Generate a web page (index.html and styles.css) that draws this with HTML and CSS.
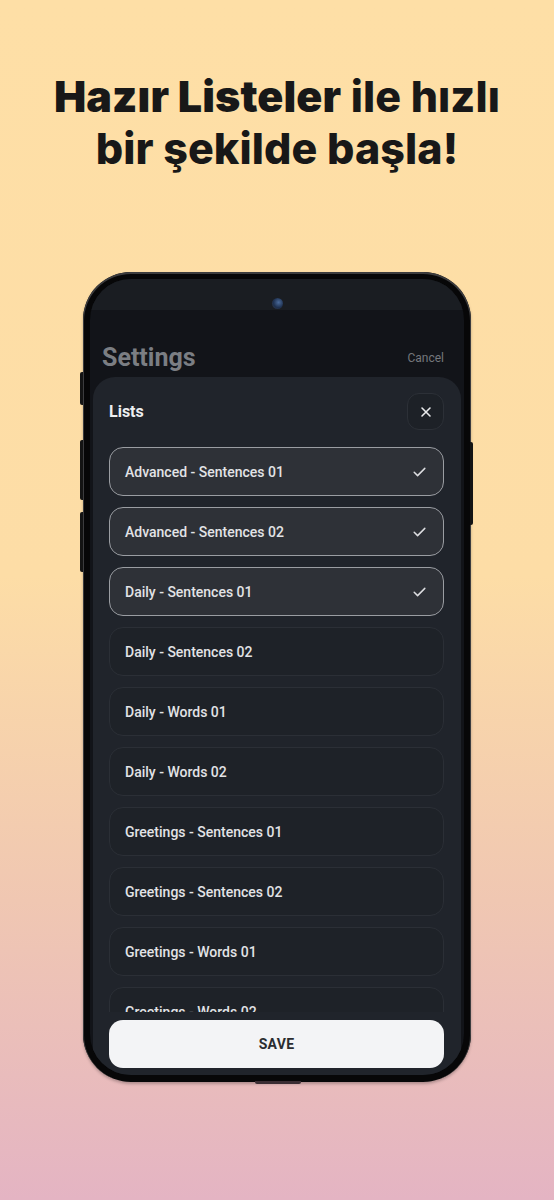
FILE: index.html
```html
<!DOCTYPE html>
<html lang="tr">
<head>
  <meta charset="UTF-8">
  <title>Hazır Listeler</title>
  <link rel="stylesheet" href="styles.css">
</head>
<body>

  <h1 class="headline"><span class="heavy">Hazır Listeler</span> ile hızlı<br>bir şekilde başla!</h1>

  <div class="phone">
    <!-- side buttons -->
    <span class="side-btn left b1"></span>
    <span class="side-btn left b2"></span>
    <span class="side-btn left b3"></span>
    <span class="side-btn right b4"></span>
    <span class="port"></span>

    <div class="screen">
      <div class="status-bar"><span class="camera"></span></div>

      <div class="settings-head">
        <h2>Settings</h2>
        <span class="cancel">Cancel</span>
      </div>

      <div class="sheet">
        <div class="sheet-head">
          <h3>Lists</h3>
          <button class="close" aria-label="close">
            <svg width="12" height="12" viewBox="0 0 12 12"><path d="M2 2L10 10M10 2L2 10" stroke="#e9eaec" stroke-width="1.6" stroke-linecap="round"/></svg>
          </button>
        </div>

        <ul class="lists">
          <li class="item selected">Advanced - Sentences 01<svg class="check" width="13" height="10" viewBox="0 0 13 10"><path d="M1.2 5.2L4.6 8.6L11.8 1.4" fill="none" stroke="#dcdde0" stroke-width="1.5" stroke-linecap="round" stroke-linejoin="round"/></svg></li>
          <li class="item selected">Advanced - Sentences 02<svg class="check" width="13" height="10" viewBox="0 0 13 10"><path d="M1.2 5.2L4.6 8.6L11.8 1.4" fill="none" stroke="#dcdde0" stroke-width="1.5" stroke-linecap="round" stroke-linejoin="round"/></svg></li>
          <li class="item selected">Daily - Sentences 01<svg class="check" width="13" height="10" viewBox="0 0 13 10"><path d="M1.2 5.2L4.6 8.6L11.8 1.4" fill="none" stroke="#dcdde0" stroke-width="1.5" stroke-linecap="round" stroke-linejoin="round"/></svg></li>
          <li class="item">Daily - Sentences 02</li>
          <li class="item">Daily - Words 01</li>
          <li class="item">Daily - Words 02</li>
          <li class="item">Greetings - Sentences 01</li>
          <li class="item">Greetings - Sentences 02</li>
          <li class="item">Greetings - Words 01</li>
          <li class="item">Greetings - Words 02</li>
        </ul>

        <button class="save">SAVE</button>
      </div>
    </div>
  </div>

</body>
</html>
```

FILE: styles.css
```css
html, body {
  margin: 0;
  padding: 0;
}

body {
  min-height: 1200px;
  background: linear-gradient(to bottom, #fedfa6 0%, #fddda6 48%, #f0c7b2 75%, #e4b4c3 100%);
  font-family: Inter, "Noto Sans", sans-serif;
  overflow: hidden;
}

.headline {
  margin: 70px 0 0;
  text-align: center;
  font-size: 43px;
  line-height: 52px;
  font-weight: 800;
  letter-spacing: 0.1px;
  color: #181818;
}

.headline .heavy {
  font-weight: 900;
}

/* phone frame */
.phone {
  position: relative;
  width: 388px;
  height: 810px;
  margin: 98px auto 0;
  padding: 7px;
  box-sizing: border-box;
  background: #070708;
  border-radius: 48px;
  box-shadow: inset 0 1px 0 1px #3c3c3e, 0 2px 3px rgba(0,0,0,0.25);
}

.side-btn {
  position: absolute;
  width: 3px;
  background: #141414;
}

.side-btn.left { left: -3px; border-radius: 2px 0 0 2px; }
.side-btn.right { right: -2px; border-radius: 0 2px 2px 0; }
.b1 { top: 100px; height: 33px; }
.b2 { top: 168px; height: 60px; }
.b3 { top: 240px; height: 60px; }
.b4 { top: 170px; height: 83px; }

.port {
  position: absolute;
  left: 172px;
  bottom: -2px;
  width: 46px;
  height: 3px;
  background: #3a2d33;
  border-radius: 0 0 2px 2px;
}

.screen {
  height: 796px;
  border-radius: 41px;
  overflow: hidden;
  background: #121419;
  display: flex;
  flex-direction: column;
  font-family: Roboto, "Noto Sans", sans-serif;
}

.status-bar {
  height: 31px;
  flex: none;
  background: #1a1d22;
  display: flex;
  justify-content: center;
  align-items: flex-end;
}

.camera {
  width: 11px;
  height: 11px;
  margin-bottom: 1px;
  border-radius: 50%;
  background: radial-gradient(circle at 60% 40%, #4a6a9a 0%, #1f3150 55%, #30343b 100%);
}

.settings-head {
  height: 67px;
  flex: none;
  display: flex;
  justify-content: space-between;
  align-items: center;
  padding: 28px 20px 0 12px;
  box-sizing: border-box;
}

.settings-head h2 {
  margin: 0;
  font-size: 25px;
  font-weight: 700;
  color: #7b7e83;
}

.cancel {
  font-size: 12px;
  color: #74777c;
}

/* bottom sheet */
.sheet {
  flex: 1;
  min-height: 0;
  margin: 0 3px;
  padding: 16px 17px 7px 16px;
  background: #20242b;
  border-radius: 22px 22px 0 0;
  display: flex;
  flex-direction: column;
}

.sheet-head {
  display: flex;
  justify-content: space-between;
  align-items: center;
  margin-bottom: 17px;
}

.sheet-head h3 {
  margin: 0;
  font-size: 16px;
  font-weight: 700;
  color: #eceef0;
}

.close {
  width: 37px;
  height: 37px;
  padding: 0;
  display: flex;
  align-items: center;
  justify-content: center;
  background: #1d2127;
  border: 1px solid #2c3037;
  border-radius: 12px;
}

.lists {
  flex: 1;
  min-height: 0;
  overflow: hidden;
  list-style: none;
  margin: 0;
  padding: 0;
  display: flex;
  flex-direction: column;
  gap: 11px;
}

.item {
  flex: none;
  height: 49px;
  box-sizing: border-box;
  display: flex;
  align-items: center;
  justify-content: space-between;
  padding: 0 17px 0 15px;
  font-size: 14px;
  font-weight: 500;
  color: #e2e3e6;
  background: #1e2228;
  border: 1px solid #2b2f36;
  border-radius: 14px;
}

.item.selected {
  background: #2e3137;
  border: 1.5px solid #9a9da2;
}

.save {
  flex: none;
  height: 48px;
  margin-top: 8px;
  border: none;
  border-radius: 14px;
  background: #f3f4f6;
  color: #2a2c30;
  font-family: Roboto, "Noto Sans", sans-serif;
  font-size: 14px;
  font-weight: 700;
  letter-spacing: 0.3px;
}
```
